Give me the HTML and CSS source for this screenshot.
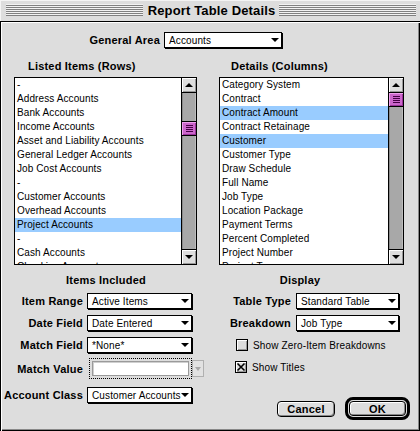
FILE: index.html
```html
<!DOCTYPE html>
<html>
<head>
<meta charset="utf-8">
<link rel="stylesheet" href="styles.css">
</head>
<body>
<div class="window">
  <div class="titlebar">
    <div class="stripes"></div>
    <div class="title">Report Table Details</div>
    <div class="stripes"></div>
  </div>
  <div class="content">
    <div class="general">
      <span class="label general-label">General Area</span>
      <div class="popup popup-general"><span>Accounts</span><span class="arrow"></span></div>
    </div>

    <div class="lists">
      <div class="listcol">
        <div class="label listhead listhead-left">Listed Items (Rows)</div>
        <div class="listbox">
          <div class="items">
            <div class="item">-</div>
            <div class="item">Address Accounts</div>
            <div class="item">Bank Accounts</div>
            <div class="item">Income Accounts</div>
            <div class="item">Asset and Liability Accounts</div>
            <div class="item">General Ledger Accounts</div>
            <div class="item">Job Cost Accounts</div>
            <div class="item">-</div>
            <div class="item">Customer Accounts</div>
            <div class="item">Overhead Accounts</div>
            <div class="item sel">Project Accounts</div>
            <div class="item">-</div>
            <div class="item">Cash Accounts</div>
            <div class="item">Checking Accounts</div>
          </div>
          <div class="scrollbar">
            <div class="arrowbox up"><span class="tri-up"></span></div>
            <div class="track"><div class="thumb thumb-left"><span class="grip"></span></div></div>
            <div class="arrowbox down"><span class="tri-down"></span></div>
          </div>
        </div>
      </div>
      <div class="listcol">
        <div class="label listhead listhead-right">Details (Columns)</div>
        <div class="listbox">
          <div class="items">
            <div class="item">Category System</div>
            <div class="item">Contract</div>
            <div class="item sel">Contract Amount</div>
            <div class="item">Contract Retainage</div>
            <div class="item sel">Customer</div>
            <div class="item">Customer Type</div>
            <div class="item">Draw Schedule</div>
            <div class="item">Full Name</div>
            <div class="item">Job Type</div>
            <div class="item">Location Package</div>
            <div class="item">Payment Terms</div>
            <div class="item">Percent Completed</div>
            <div class="item">Project Number</div>
            <div class="item">Project Type</div>
          </div>
          <div class="scrollbar">
            <div class="arrowbox up"><span class="tri-up"></span></div>
            <div class="track"><div class="thumb thumb-right"><span class="grip"></span></div></div>
            <div class="arrowbox down"><span class="tri-down"></span></div>
          </div>
        </div>
      </div>
    </div>

    <div class="options">
      <div class="opt-col opt-left">
        <div class="label opt-head">Items Included</div>
        <div class="frow">
          <span class="label">Item Range</span>
          <div class="popup"><span>Active Items</span><span class="arrow"></span></div>
        </div>
        <div class="frow">
          <span class="label">Date Field</span>
          <div class="popup"><span>Date Entered</span><span class="arrow"></span></div>
        </div>
        <div class="frow">
          <span class="label">Match Field</span>
          <div class="popup"><span>*None*</span><span class="arrow"></span></div>
        </div>
        <div class="frow frow-match">
          <span class="label">Match Value</span>
          <div class="matchwrap">
            <div class="focusring"><div class="field"></div></div>
            <div class="disarrow"><span class="tri-dis"></span></div>
          </div>
        </div>
        <div class="frow frow-class">
          <span class="label">Account Class</span>
          <div class="popup"><span>Customer Accounts</span><span class="arrow"></span></div>
        </div>
      </div>

      <div class="opt-col opt-right">
        <div class="label opt-head">Display</div>
        <div class="frow">
          <span class="label">Table Type</span>
          <div class="popup"><span>Standard Table</span><span class="arrow"></span></div>
        </div>
        <div class="frow">
          <span class="label">Breakdown</span>
          <div class="popup"><span>Job Type</span><span class="arrow"></span></div>
        </div>
        <div class="check-row check-first">
          <span class="check"></span>
          <span class="check-text">Show Zero-Item Breakdowns</span>
        </div>
        <div class="check-row check-second">
          <span class="check"><svg width="10" height="10" viewBox="0 0 10 10"><path d="M1.5 1.5 L8.5 8.5 M8.5 1.5 L1.5 8.5" stroke="#000" stroke-width="1.6" fill="none"/></svg></span>
          <span class="check-text">Show Titles</span>
        </div>
        <div class="buttons">
          <div class="btn">Cancel</div>
          <div class="okring"><div class="btn btn-ok">OK</div></div>
        </div>
      </div>
    </div>
  </div>
</div>
</body>
</html>
```

FILE: styles.css
```css
* { box-sizing: border-box; }

body {
  margin: 0;
  background: #ffffff;
  font-family: "Liberation Sans", Arial, sans-serif;
  color: #000;
}

.window {
  width: 420px;
  height: 431px;
  background: #dddddd;
  display: flex;
  flex-direction: column;
}

/* Title bar */
.titlebar {
  height: 22px;
  border-bottom: 1px solid #000;
  display: flex;
  align-items: flex-start;
  padding: 0 4px 0 6px;
  box-shadow: inset 1px 1px 0 #f4f4f4;
}
.stripes {
  flex: 1;
  height: 12px;
  margin-top: 4px;
  background: repeating-linear-gradient(to bottom, #f2f2f2 0 1px, #808080 1px 2px);
}
.title {
  font-weight: bold;
  font-size: 13px;
  line-height: 21px;
  letter-spacing: 0.15px;
  margin: 0 4px 0 5px;
  white-space: nowrap;
}

/* Content */
.content {
  flex: 1;
  box-shadow: inset 1px 0 0 #000, inset 2px 1px 0 #fff, inset -1px -1px 0 #000, inset -2px -2px 0 #888;
}

.label {
  font-weight: bold;
  font-size: 11px;
  letter-spacing: 0.2px;
  white-space: nowrap;
}

.general {
  display: flex;
  align-items: center;
  margin-top: 10px;
}
.general-label {
  width: 160px;
  text-align: right;
  margin-right: 4px;
}

/* Popup menus */
.popup {
  height: 16px;
  border: 1px solid #000;
  background: #fff;
  box-shadow: 1px 1px 0 #000;
  display: flex;
  align-items: center;
  justify-content: space-between;
  padding: 0 2px 0 4px;
  font-size: 10px;
  letter-spacing: 0.12px;
  white-space: nowrap;
}
.popup-general { width: 118px; }
.arrow {
  width: 0;
  height: 0;
  border-left: 4px solid transparent;
  border-right: 4px solid transparent;
  border-top: 4px solid #000;
  flex: none;
}

/* Lists */
.lists {
  display: grid;
  grid-template-columns: 183px 185px;
  column-gap: 22px;
  padding-left: 14px;
  margin-top: 11px;
}
.listhead {
  height: 14px;
  line-height: 14px;
  margin-bottom: 4px;
}
.listhead-left { padding-left: 14px; }
.listhead-right { padding-left: 12px; }

.listbox {
  height: 188px;
  border: 1px solid #000;
  background: #fff;
  display: flex;
  overflow: hidden;
}
.items {
  flex: 1;
  overflow: hidden;
  font-size: 10px;
  letter-spacing: 0.1px;
}
.item {
  height: 14px;
  line-height: 14px;
  padding-left: 2px;
  white-space: nowrap;
}
.item.sel { background: #99ccff; }

.scrollbar {
  width: 15px;
  flex: none;
  border-left: 1px solid #000;
  display: flex;
  flex-direction: column;
}
.arrowbox {
  height: 15px;
  flex: none;
  background: #dddddd;
  display: flex;
  align-items: center;
  justify-content: center;
  box-shadow: inset 1px 1px 0 #fff, inset -1px -1px 0 #999;
}
.arrowbox.up { border-bottom: 1px solid #000; }
.arrowbox.down { border-top: 1px solid #000; }
.tri-up {
  width: 0; height: 0;
  border-left: 4px solid transparent;
  border-right: 4px solid transparent;
  border-bottom: 4px solid #000;
}
.tri-down {
  width: 0; height: 0;
  border-left: 4px solid transparent;
  border-right: 4px solid transparent;
  border-top: 4px solid #000;
}
.track {
  flex: 1;
  background: #a8a8a8;
  box-shadow: inset 1px 0 0 #8a8a8a, inset -1px 0 0 #bdbdbd;
}
.thumb {
  height: 15px;
  border-top: 1px solid #000;
  border-bottom: 1px solid #000;
  background: #cc66cc;
  box-shadow: inset 1px 1px 0 #f0a0f0, inset -1px -1px 0 #993399;
  display: flex;
  align-items: center;
  justify-content: center;
}
.grip {
  width: 7px;
  height: 7px;
  background: repeating-linear-gradient(to bottom, #440044 0 1px, transparent 1px 2px);
}
.thumb-left { margin-top: 28px; }
.thumb-right { margin-top: -1px; }

/* Options */
.options {
  display: grid;
  grid-template-columns: 210px 210px;
  margin-top: 8px;
}
.opt-col {
  display: flex;
  flex-direction: column;
}
.opt-head {
  height: 14px;
  line-height: 14px;
  text-align: center;
}
.opt-left .opt-head { padding-left: 2px; }
.opt-right .opt-head { padding-right: 30px; }

.frow {
  display: grid;
  align-items: center;
  height: 16px;
  margin-top: 6px;
}
.frow .label { text-align: right; }
.opt-left .frow { grid-template-columns: 83px 105px; column-gap: 4px; }
.opt-right .frow { grid-template-columns: 81px 103px; column-gap: 5px; }

.opt-left .frow.frow-match {
  grid-template-columns: 83px auto;
  height: 21px;
  margin-top: 5px;
}
.opt-left .frow.frow-class { margin-top: 8px; }

.matchwrap {
  display: flex;
  align-items: center;
  margin-left: 2px;
}
.focusring {
  width: 103px;
  height: 21px;
  border: 1px dotted #000;
  padding: 2px;
}
.field {
  height: 15px;
  background: #fff;
  border: 1px solid #9a9a9a;
  box-shadow: inset 1px 1px 0 #cfcfcf;
}
.disarrow {
  width: 12px;
  height: 17px;
  background: #e2e2e2;
  border: 1px solid #b0b0b0;
  display: flex;
  align-items: center;
  justify-content: center;
}
.tri-dis {
  width: 0; height: 0;
  border-left: 3.5px solid transparent;
  border-right: 3.5px solid transparent;
  border-top: 4px solid #a8a8a8;
}

.check-row {
  display: flex;
  align-items: center;
  gap: 5px;
  padding-left: 26px;
  height: 12px;
}
.check-first { margin-top: 8px; }
.check-second { margin-top: 10px; padding-left: 25px; }
.check {
  width: 12px;
  height: 12px;
  border: 1px solid #000;
  background: #dddddd;
  box-shadow: inset 1px 1px 0 #fff, inset -1px -1px 0 #999;
  display: flex;
  align-items: center;
  justify-content: center;
  flex: none;
}
.check svg { display: block; }
.check-text {
  font-size: 10px;
  letter-spacing: 0.15px;
  white-space: nowrap;
}

/* Buttons */
.buttons {
  display: flex;
  justify-content: flex-end;
  align-items: center;
  gap: 10px;
  padding-right: 10px;
  margin-top: 24px;
}
.btn {
  width: 58px;
  height: 16px;
  border: 1px solid #000;
  border-radius: 4px;
  background: #dddddd;
  box-shadow: inset 1px 1px 0 #fff, inset -1px -1px 0 #888;
  display: flex;
  align-items: center;
  justify-content: center;
  font-weight: bold;
  font-size: 11px;
  letter-spacing: 0.2px;
}
.okring {
  border: 3px solid #000;
  border-radius: 8px;
  padding: 1px;
}
.btn-ok {
  width: 57px;
  height: 15px;
}
```
